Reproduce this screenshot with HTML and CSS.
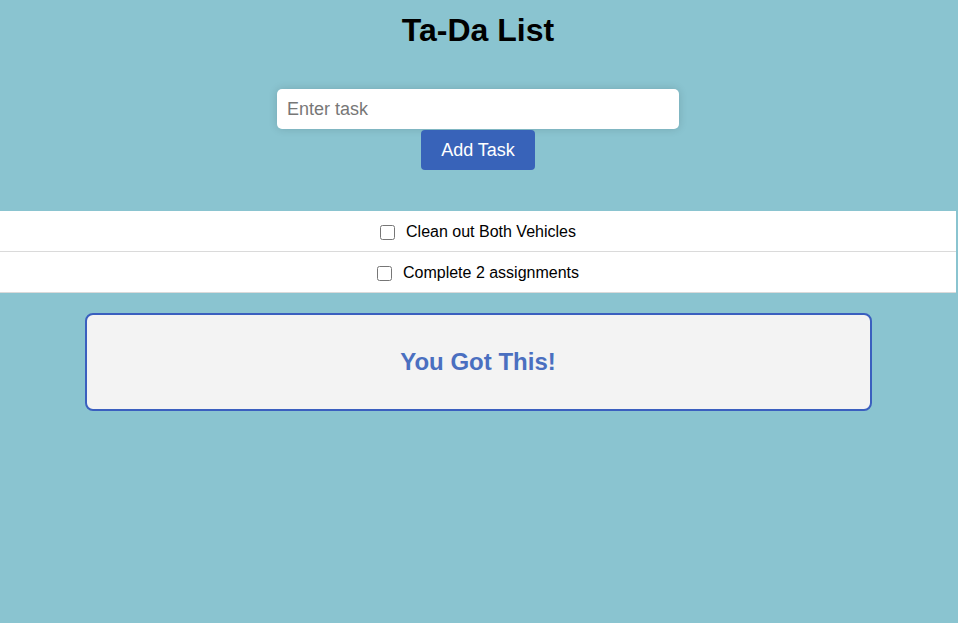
FILE: index.html
```html
<!DOCTYPE html>
<html>
<head>
<meta charset="utf-8">
<title>Ta-Da List</title>
<link rel="stylesheet" href="styles.css">
</head>
<body>
<div class="page">
  <h1 class="title">Ta-Da List</h1>
  <div class="form">
    <input class="task-input" type="text" placeholder="Enter task">
    <button class="add-btn">Add Task</button>
  </div>
  <ul class="task-list">
    <li class="task"><label><input type="checkbox"> Clean out Both Vehicles</label></li>
    <li class="task"><label><input type="checkbox"> Complete 2 assignments</label></li>
  </ul>
  <div class="motivation">
    <h2 class="motivation-text">You Got This!</h2>
  </div>
</div>
</body>
</html>
```
FILE: styles.css
```css
html, body {
  margin: 0;
  padding: 0;
}
body {
  background: #8ac4d0;
  font-family: "Liberation Sans", Arial, sans-serif;
  min-height: 623px;
}
.page {
  width: 956px;
  padding-top: 12px;
}
.title {
  margin: 0;
  font-size: 32px;
  line-height: 37px;
  text-align: center;
  color: #000;
}
.form {
  display: flex;
  flex-direction: column;
  align-items: center;
  margin-top: 40px;
}
.task-input {
  box-sizing: border-box;
  width: 402px;
  height: 40px;
  border: none;
  border-radius: 5px;
  padding: 0 10px;
  font-family: "Liberation Sans", Arial, sans-serif;
  font-size: 18px;
  background: #fff;
  box-shadow: 0 0 8px rgba(0, 0, 0, 0.15);
  outline: none;
}
.task-input::placeholder {
  color: #777;
}
.add-btn {
  width: 114px;
  height: 40px;
  margin-top: 1px;
  border: none;
  border-radius: 4px;
  background: #3863b9;
  color: #fff;
  font-family: "Liberation Sans", Arial, sans-serif;
  font-size: 18px;
}
.task-list {
  list-style: none;
  margin: 41px 0 0;
  padding: 0;
}
.task {
  background: #fff;
  height: 40px;
  border-bottom: 1px solid #dadada;
  display: flex;
  align-items: center;
  justify-content: center;
  font-size: 16px;
  color: #000;
}
.task label {
  display: flex;
  align-items: center;
  gap: 4px;
  padding-top: 2px;
}
.task input {
  margin: 0 7px 0 0;
  width: 15px;
  height: 15px;
}
.motivation {
  box-sizing: border-box;
  margin: 20px auto 0;
  width: 787px;
  height: 98px;
  background: #f3f3f3;
  border: 2px solid #3a5fbf;
  border-radius: 8px;
  display: flex;
  align-items: center;
  justify-content: center;
}
.motivation-text {
  margin: 0;
  font-size: 24px;
  font-weight: bold;
  color: #4a6fc0;
}
```
